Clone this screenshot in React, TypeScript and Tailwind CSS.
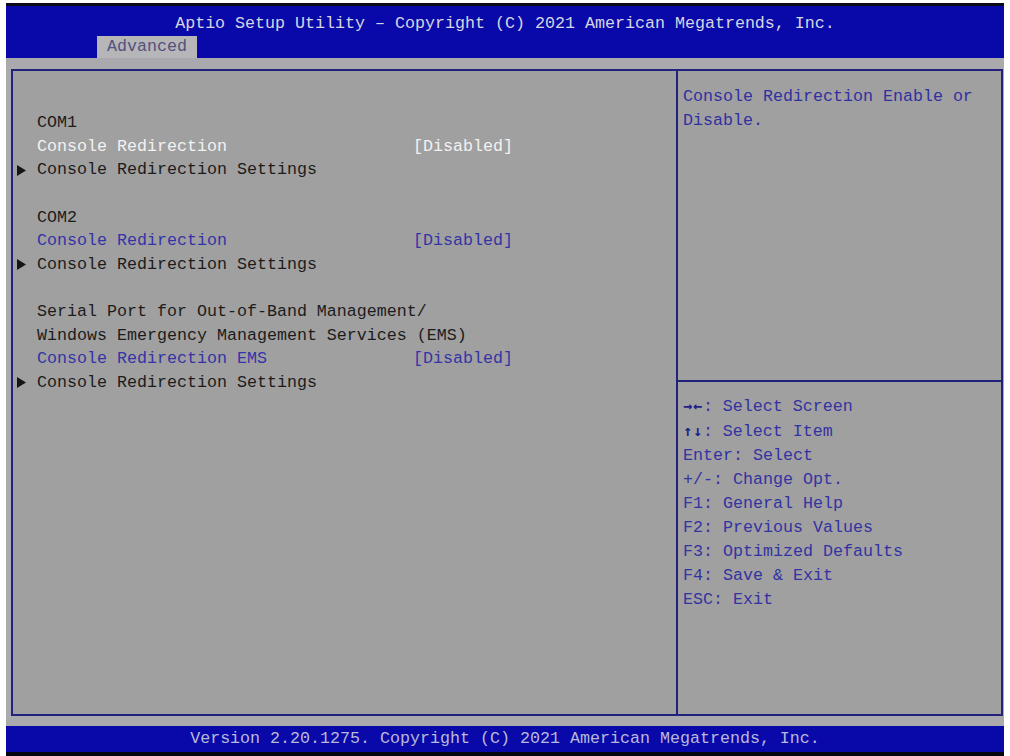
import type React from "react"

type Row = {
  kind: "text" | "item" | "sub" | "blank"
  label?: string
  value?: string
  tone?: "white" | "blue"
}

const rows: Row[] = [
  { kind: "text", label: "COM1" },
  { kind: "item", label: "Console Redirection", value: "[Disabled]", tone: "white" },
  { kind: "sub", label: "Console Redirection Settings" },
  { kind: "blank" },
  { kind: "text", label: "COM2" },
  { kind: "item", label: "Console Redirection", value: "[Disabled]", tone: "blue" },
  { kind: "sub", label: "Console Redirection Settings" },
  { kind: "blank" },
  { kind: "text", label: "Serial Port for Out-of-Band Management/" },
  { kind: "text", label: "Windows Emergency Management Services (EMS)" },
  { kind: "item", label: "Console Redirection EMS", value: "[Disabled]", tone: "blue" },
  { kind: "sub", label: "Console Redirection Settings" },
]

const helpKeys: [string, string][] = [
  ["→←", ": Select Screen"],
  ["↑↓", ": Select Item"],
  ["", "Enter: Select"],
  ["", "+/-: Change Opt."],
  ["", "F1: General Help"],
  ["", "F2: Previous Values"],
  ["", "F3: Optimized Defaults"],
  ["", "F4: Save & Exit"],
  ["", "ESC: Exit"],
]

const Arrow = () => (
  <svg width="9" height="11" viewBox="0 0 9 11" className="mt-[1px]">
    <path d="M0 0 L9 5.5 L0 11 Z" fill="#151515" />
  </svg>
)

const MenuRow: React.FC<{ row: Row }> = ({ row }) => {
  if (row.kind === "blank") return <div className="h-[23.6px]" />

  const labelColor =
    row.tone === "white" ? "text-[#f2f2f2]" : row.tone === "blue" ? "text-[#3434a6]" : "text-[#1c1c1c]"

  return (
    <div className="flex items-center h-[23.6px] whitespace-pre">
      <span className="w-[20px] flex items-center">{row.kind === "sub" && <Arrow />}</span>
      <span className={`w-[376px] ${labelColor}`}>{row.label}</span>
      {row.value && <span className={labelColor}>{row.value}</span>}
    </div>
  )
}

const App: React.FC = () => {
  return (
    <div className="w-[1010px] h-[756px] bg-white pl-[6px] pt-[3px] overflow-hidden font-['Liberation_Mono','DejaVu_Sans_Mono',monospace] text-[16.67px]">
      <div className="w-[998px] flex flex-col">
        {/* top shade */}
        <div className="h-[3px] bg-[#0a0a1a]" />

        {/* Header */}
        <div className="h-[52px] bg-[#0909a9] flex flex-col">
          <div className="pt-[6px] leading-[24px] text-center text-[#d6d6e2] whitespace-pre">
            Aptio Setup Utility – Copyright (C) 2021 American Megatrends, Inc.
          </div>
          <div className="flex">
            <div className="ml-[91px] h-[22px] leading-[22px] px-[10px] bg-[#b6b6b9] text-[#52527e]">Advanced</div>
          </div>
        </div>

        {/* Body */}
        <div className="h-[668px] bg-[#a9a9ae] pt-[11px] pl-[5px] pr-[1px] pb-[10px]">
          <div className="h-full border-2 border-[#22227c] flex bg-[#a0a0a0]">
            {/* Left panel */}
            <div className="w-[665px] border-r-2 border-[#22227c] pt-[40px] pl-[4px]">
              {rows.map((row, i) => (
                <MenuRow key={i} row={row} />
              ))}
            </div>

            {/* Right panel */}
            <div className="flex-1 flex flex-col">
              <div className="h-[309px] pt-[14px] pl-[5px] leading-[24px] text-[#3030a0]">
                <div>Console Redirection Enable or</div>
                <div>Disable.</div>
              </div>
              <div className="border-t-2 border-[#22227c] pt-[12px] pl-[5px] leading-[24px] text-[#3333a2]">
                {helpKeys.map(([k, rest], i) => (
                  <div key={i} className="whitespace-pre">
                    {k && (
                      <span className="font-['DejaVu_Sans_Mono',monospace] font-bold text-[15px] tracking-[0.9px] text-[#1e1e8c]">
                        {k}
                      </span>
                    )}
                    {rest}
                  </div>
                ))}
              </div>
            </div>
          </div>
        </div>

        {/* Footer */}
        <div className="h-[26px] bg-[#0909a9] leading-[26px] text-center text-[#b9b9d9] whitespace-pre">
          Version 2.20.1275. Copyright (C) 2021 American Megatrends, Inc.
        </div>
        <div className="h-[4px] bg-[#050510]" />
      </div>
    </div>
  )
}

export default App
